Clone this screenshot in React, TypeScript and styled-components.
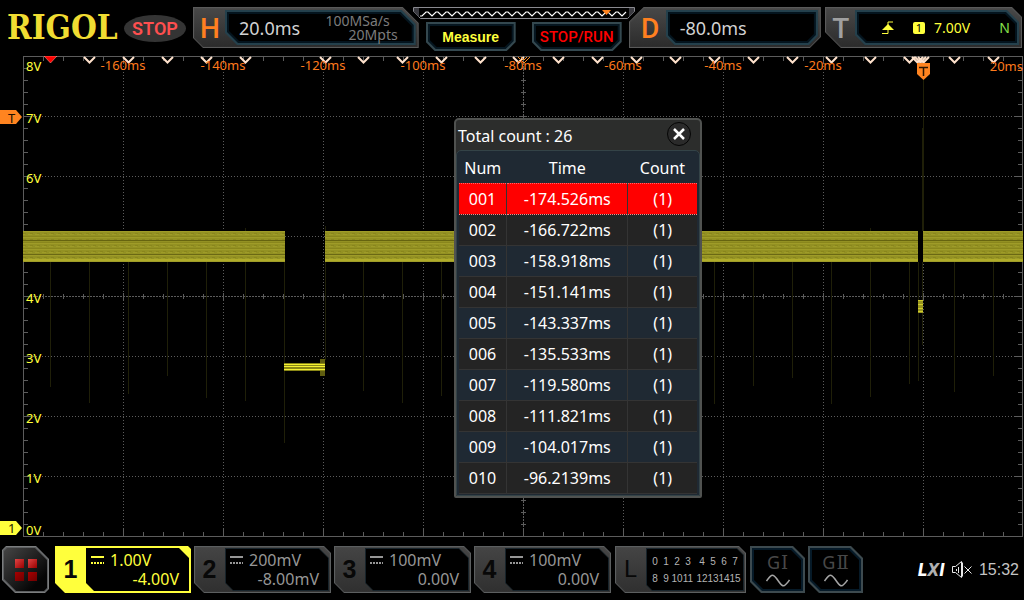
import React from "react";
import styled, { createGlobalStyle, css } from "styled-components";

const UI = `"Noto Sans", "Open Sans", sans-serif`;
const SANS = `"Liberation Sans", Arial, sans-serif`;

const Global = createGlobalStyle`
  *, *::before, *::after { box-sizing: border-box; }
  body { margin: 0; background: #000; color: #fff; font-family: ${UI}; }
  button { margin: 0; padding: 0; border: 0; background: none; color: inherit; font: inherit; cursor: pointer; }
`;

/* ---------- bevelled shapes ---------- */

type Cuts = [number, number, number, number]; // top-left, top-right, bottom-right, bottom-left

const bevel = (cuts: Cuts, inset = 0) => {
  const [a, b, c, d] = cuts.map((v) => Math.max(0, v - Math.round(inset / 2)));
  return `clip-path: polygon(${a}px 0, calc(100% - ${b}px) 0, 100% ${b}px, 100% calc(100% - ${c}px),
    calc(100% - ${c}px) 100%, ${d}px 100%, 0 calc(100% - ${d}px), 0 ${a}px);`;
};

const layers = (cuts: Cuts, edge: string, mid: string, face: string, edgeWidth: number, midWidth: number) => css`
  position: relative;
  isolation: isolate;
  background: ${edge};
  ${bevel(cuts)}
  &::before, &::after { content: ""; position: absolute; z-index: -1; }
  &::before { inset: ${edgeWidth}px; background: ${mid}; ${bevel(cuts, edgeWidth)} }
  &::after { inset: ${edgeWidth + midWidth}px; background: ${face}; ${bevel(cuts, edgeWidth + midWidth)} }
`;

/* ---------- header ---------- */

const Screen = styled.main`
  display: flex;
  flex-direction: column;
  min-height: 100vh;
  overflow: hidden;
`;

const Header = styled.header`
  display: flex;
  align-items: flex-start;
  height: 56px;
  padding: 7px 2px 0 7px;
`;

const Brand = styled.div`
  width: 117px;
  padding-top: 1px;
  font: bold 33px/40px "DejaVu Serif Condensed", "DejaVu Serif", serif;
  color: #f0dc32;
`;

const RunState = styled.div`
  width: 62px;
  height: 27px;
  margin: 8px 7px 0 0;
  border-radius: 50%;
  background: #343434;
  color: #ff4f4f;
  font: 600 18px/28px Roboto, sans-serif;
  text-align: center;
`;

const HeadPanel = styled.section<{ $cuts: Cuts; $grow: number; $gap?: number }>`
  ${(p) => layers(p.$cuts, "#5a5a5a", "linear-gradient(#4b4b4b, #2e2e2e)", "linear-gradient(#474747, #2c2c2c)", 1, 1)}
  display: flex;
  flex: ${(p) => p.$grow} 1 0;
  height: 41px;
  margin-left: ${(p) => p.$gap ?? 0}px;
  padding: 3px 3px 3px 0;
`;

const PanelLetter = styled.h2<{ $color: string; $width: number; $pad?: number }>`
  width: ${(p) => p.$width}px;
  margin: 0;
  padding-left: ${(p) => p.$pad ?? 0}px;
  color: ${(p) => p.$color};
  font: 500 28px/37px Roboto, sans-serif;
  text-align: center;
`;

const Readout = styled.div<{ $cuts: Cuts }>`
  ${(p) => layers(p.$cuts, "#24404c", "#04141e", "#000", 2, 2)}
  display: flex;
  flex: 1;
  align-items: center;
  justify-content: space-between;
  padding: 0 14px;
  color: #d2d2d2;
  font-size: 18px;
  line-height: 24px;
`;

const Acquisition = styled.div`
  display: flex;
  flex-direction: column;
  align-items: flex-end;
  padding-right: 4px;
  color: #7c7c7c;
  font-size: 14px;
  line-height: 14px;
`;

const SampleRate = styled.span`
  padding-right: 8px;
`;

const Trigger = styled.div`
  display: flex;
  flex: 1;
  align-items: center;
  padding-left: 13px;
  color: #ffff3c;
  font-size: 14px;
`;

const Source = styled.span`
  width: 12px;
  height: 12px;
  margin: 0 9px 0 19px;
  border-radius: 2px;
  background: #ffff3c;
  color: #000;
  font-size: 11px;
  line-height: 12px;
  text-align: center;
`;

const Sweep = styled.span`
  margin-left: auto;
  margin-right: -5px;
  color: #86e04a;
`;

const Middle = styled.div`
  width: 222px;
  margin: 0 -6px;
  position: relative;
  z-index: 1;
`;

const MemoryBar = styled.svg`
  display: block;
  width: 100%;
  height: 12px;
`;

const Actions = styled.div`
  display: flex;
  justify-content: space-between;
  padding: 3px 13px 0;
`;

const ActionButton = styled.button<{ $color: string; $font: string }>`
  ${layers([0, 0, 9, 9], "#34484f", "#061620", "#000", 2, 2)}
  width: 90px;
  height: 29px;
  color: ${(p) => p.$color};
  font: ${(p) => p.$font};
`;

/* ---------- plot ---------- */

const PlotArea = styled.section`
  position: relative;
`;

const Chart = styled.svg`
  display: block;
  width: 100%;
  height: auto;
  font-family: ${UI};
  font-size: 13px;
`;

const eventMarks = [89, 128, 167, 206, 245, 325, 363, 402, 441, 480, 518, 558, 597, 636, 675, 714, 753, 792, 831, 870, 909, 917, 920, 923, 954, 993];

const spikes: [number, number, number][] = [
  [50, 262, 387], [89, 262, 403], [128, 262, 394], [167, 262, 376], [206, 262, 398], [245, 228, 401],
  [284, 262, 443], [325, 226, 360], [363, 262, 391], [402, 262, 403], [441, 262, 396], [714, 262, 404],
  [753, 262, 386], [792, 262, 378], [831, 262, 404], [870, 228, 397], [909, 262, 384], [918, 240, 381],
  [922, 128, 345], [923, 80, 232], [954, 262, 392], [993, 262, 376],
];

const timeLabels: [number, string][] = [
  [123, "-160ms"], [223, "-140ms"], [323, "-120ms"], [423, "-100ms"],
  [523, "-80ms"], [623, "-60ms"], [723, "-40ms"], [823, "-20ms"],
];

const voltLabels: [number, string][] = [
  [71, "8V"], [123, "7V"], [183, "6V"], [303, "4V"], [363, "3V"], [423, "2V"], [483, "1V"], [535, "0V"],
];

const range = (from: number, to: number, step: number) =>
  Array.from({ length: Math.floor((to - from) / step) + 1 }, (_, i) => from + i * step);

function ticks() {
  let d = "";
  range(43, 1003, 20).forEach((x) => {
    const major = (x - 23) % 100 === 0;
    d += `M${x + 0.5} 57v${major ? 7 : 4}M${x + 0.5} 536v${major ? -7 : -4}M${x + 0.5} ${major ? 293 : 294}v${major ? 7 : 5}`;
  });
  range(68, 524, 12).forEach((y) => {
    const major = (y - 56) % 60 === 0;
    d += `M24 ${y + 0.5}h${major ? 7 : 4}M1022 ${y + 0.5}h${major ? -7 : -4}M${major ? 520 : 521} ${y + 0.5}h${major ? 7 : 5}`;
  });
  return d;
}

function Band({ x, width }: { x: number; width: number }) {
  return (
    <g>
      <rect x={x} y={231} width={width} height={31} fill="url(#noise)" />
      <rect x={x} y={240} width={width} height={1} fill="#66640f" />
      <rect x={x} y={254} width={width} height={1} fill="#6a6814" />
      <rect x={x} y={259} width={width} height={2} fill="#b0ac2a" />
    </g>
  );
}

function Waveform() {
  return (
    <Chart viewBox="0 56 1024 484" role="img" aria-label="Channel 1 waveform">
      <defs>
        <pattern id="noise" width="7" height="6" y="231" patternUnits="userSpaceOnUse">
          <rect width="7" height="6" fill="#939123" />
          <path d="M0 .5h7M0 3.5h4" stroke="#9f9c28" />
          <path d="M2 2.5h3M0 5.5h7" stroke="#89861c" />
        </pattern>
      </defs>
      <g stroke="#5c5c5c" fill="none" shapeRendering="crispEdges">
        <path strokeDasharray="1 2" d={range(123, 923, 100).map((x) => `M${x + 0.5} 66V536`).join("") + range(116, 476, 60).map((y) => `M24 ${y + 0.5}H1022`).join("")} />
        <path strokeDasharray="2 1" d="M24 296.5H1022M523.5 57V536" />
        <path d="M23.5 56.5H1022.5V536.5H23.5Z" />
        <path d={ticks()} />
      </g>
      <g stroke="#1f1f08" shapeRendering="crispEdges">
        {spikes.map(([x, a, b]) => <path key={x} d={`M${x + 0.5} ${a}V${b}`} />)}
      </g>
      <rect x={918} y={231} width={5} height={31} fill="#000" />
      <Band x={23} width={262} />
      <Band x={325} width={593} />
      <Band x={923} width={100} />
      <g shapeRendering="crispEdges">
        <rect x={320} y={359} width={5} height={17} fill="#5f5d10" />
        <rect x={284} y={363} width={41} height={8} fill="#8a8716" />
        <path d="M284 364.5h41M284 366.5h41M284 369.5h41" stroke="#f4f032" />
        <rect x={918} y={300} width={5} height={13} fill="#98951f" />
        <path d="M918 300.5h5M918 304.5h5M918 308.5h5M918 311.5h5" stroke="#d0cc2c" />
      </g>
      <g fill="none" stroke="#ffe2cc" strokeWidth="2">
        {eventMarks.map((x) => <path key={x} d={`M${x - 5} 57l5.500 5.500 5.500-5.500`} />)}
      </g>
      <path d="M44 56h13l-6.500 7z" fill="#f00" stroke="#ffb0a0" strokeWidth=".5" />
      <path d="M518 57l6 6 6-6M521 57l3 3 3-3" fill="none" stroke="#ff8a20" strokeWidth="1" />
      <g fill="#ff7a1c">
        {timeLabels.map(([x, t]) => <text key={t} x={x} y={70} textAnchor="middle">{t}</text>)}
        <text x={1023} y={71} textAnchor="end">20ms</text>
      </g>
      <g fill="#ffff3c">
        {voltLabels.map(([y, t]) => <text key={t} x={26} y={y}>{t}</text>)}
      </g>
      <path d="M917 63h13v11l-6.500 6-6.500-6z" fill="#ff8420" />
      <path d="M919 67.500h9M923.500 67v9" stroke="#2b1500" strokeWidth="1.500" />
      <path d="M0 110h16l6 7-6 7H0z" fill="#ff8420" />
      <text x={8} y={123} fill="#221000">T</text>
      <path d="M0 521h16l6 7-6 7H0z" fill="#ffff3c" />
      <text x={8} y={533} fill="#222200">1</text>
    </Chart>
  );
}

/* ---------- event table dialog ---------- */

const Dialog = styled.div`
  position: absolute;
  top: 62px;
  left: 454px;
  width: 248px;
  border: 2px solid #505250;
  border-radius: 5px 5px 2px 2px;
  background: #2c2d2c;
  font-size: 16px;
`;

const TitleBar = styled.div`
  display: flex;
  align-items: center;
  justify-content: space-between;
  height: 30px;
  padding: 2px 9px 0 2px;
`;

const Title = styled.h1`
  margin: 0;
  font-size: 16px;
  font-weight: 400;
  line-height: 24px;
`;

const Close = styled.button`
  display: grid;
  place-items: center;
  width: 24px;
  height: 24px;
  margin-top: -4px;
  border: 1px solid #050505;
  border-radius: 50%;
  background: #2a2a2a;
`;

const TableFrame = styled.div`
  padding: 1px 2px;
  border: 1px solid #344347;
  border-radius: 5px 5px 0 0;
  background: #1f2933;
`;

const Events = styled.table`
  width: 100%;
  table-layout: fixed;
  border-collapse: collapse;
  text-align: center;
`;

const HeadCell = styled.th<{ $width: number }>`
  width: ${(p) => p.$width}%;
  height: 31px;
  padding: 2px 0 0;
  font-weight: 400;
  line-height: 24px;
`;

const Row = styled.tr<{ $selected: boolean }>`
  background: ${(p) => (p.$selected ? "#f00" : "#242424")};
  &:nth-child(2n + 3) { background: #1f2933; }
  & > td { ${(p) => p.$selected && "border-top: 1px dotted #f66; border-bottom: 1px dotted #f88;"} }
`;

const Cell = styled.td`
  height: 31px;
  padding: 0;
  border-bottom: 1px solid #343434;
  line-height: 24px;
  & + & { border-left: 1px solid #343434; }
`;

const times = ["-174.526ms", "-166.722ms", "-158.918ms", "-151.141ms", "-143.337ms", "-135.533ms", "-119.580ms", "-111.821ms", "-104.017ms", "-96.2139ms"];

/* ---------- footer ---------- */

const Footer = styled.footer`
  display: flex;
  align-items: center;
  gap: 3px;
  padding: 6px 5px 6px 2px;
`;

const MenuButton = styled.button`
  ${layers([4, 13, 4, 13], "#7b7d7e", "#5c5e60", "linear-gradient(135deg, #454545, #050505 80%)", 1, 1)}
  display: grid;
  place-items: center;
  width: 47px;
  height: 47px;
  margin-right: 3px;
`;

const Tiles = styled.span`
  display: grid;
  grid-template-columns: 9px 9px;
  gap: 4px;
`;

const Tile = styled.i`
  height: 9px;
  background: linear-gradient(135deg, #e04444, #9a0000);
  &:nth-child(n + 3) { background: linear-gradient(135deg, #a80000, #6e0000); }
`;

const ChannelButton = styled.button<{ $active?: boolean; $logic?: boolean }>`
  ${(p) =>
    p.$active
      ? layers([0, 3, 0, 10], "#ffff3c", "#ffff3c", "#ffff3c", 1, 1)
      : layers([0, 7, 0, 10], "#5c5f60", "linear-gradient(#484848, #333)", "linear-gradient(#444, #303030)", 1, 1)}
  display: flex;
  width: ${(p) => (p.$logic ? 131 : p.$active ? 136 : 137)}px;
  height: 47px;
  padding: 2px 2px 2px 0;
  color: ${(p) => (p.$active ? "#ffff3c" : "#969696")};
  ${(p) => p.$logic && "margin: 0 1px;"}
`;

const ChannelNumber = styled.span`
  width: 31px;
  color: #080808;
  font: bold 25px/43px ${SANS};
  text-align: center;
`;

const LogicLetter = styled(ChannelNumber)`
  font: 24px/43px Roboto, sans-serif;
`;

const ChannelBody = styled.span<{ $active?: boolean }>`
  ${(p) => layers([0, 10, 0, 8], p.$active ? "#000" : "#18242b", "#000", "#000", 1, 1)}
  display: flex;
  flex: 1;
  flex-direction: column;
  justify-content: center;
  padding: 1px 10px 0 4px;
  font-size: 16px;
  line-height: 19px;
  text-align: right;
`;

const ScaleLine = styled.span`
  display: flex;
  align-items: center;
  gap: 6px;
`;

const Bits = styled.span`
  ${layers([0, 7, 0, 6], "#18242b", "#000", "#000", 1, 1)}
  display: grid;
  flex: 1;
  grid-template-columns: repeat(4, 11px) 3px repeat(4, 11px);
  align-content: center;
  justify-content: center;
  color: #b4b4b4;
  font: 10px/17px ${SANS};
  text-align: center;
`;

const GeneratorButton = styled.button`
  ${layers([0, 12, 0, 11], "#3d4a4f", "#061a28", "#000", 2, 2)}
  display: flex;
  flex-direction: column;
  align-items: center;
  width: 55px;
  height: 47px;
  padding-top: 5px;
  color: #484848;
  font-size: 18px;
  line-height: 23px;
`;

const Roman = styled.span`
  margin-left: 1px;
  font-family: "DejaVu Serif", serif;
  font-size: 18px;
`;

const Status = styled.div`
  display: flex;
  align-items: center;
  gap: 7px;
  margin-left: auto;
  color: #c4c4c4;
  font: 16px/24px ${SANS};
`;

const Lxi = styled.span`
  color: #fff;
  font: italic 900 17px/24px "DejaVu Sans Condensed", ${SANS};
  & > span { color: #b0b0b0; }
`;

const Coupling = () => (
  <svg width="14" height="9" viewBox="0 0 14 9" stroke="currentColor" shapeRendering="crispEdges">
    <path d="M1 1h13" strokeWidth="2" />
    <path d="M1 6.500h13" strokeWidth="2" strokeDasharray="2 1" />
  </svg>
);

function Channel({ n, scale, offset, active }: { n: number; scale: string; offset: string; active?: boolean }) {
  return (
    <ChannelButton $active={active} aria-label={`Channel ${n}`}>
      <ChannelNumber>{n}</ChannelNumber>
      <ChannelBody $active={active}>
        <ScaleLine><Coupling />{scale}</ScaleLine>
        <span>{offset}</span>
      </ChannelBody>
    </ChannelButton>
  );
}

function Generator({ numeral }: { numeral: string }) {
  return (
    <GeneratorButton>
      <span>G<Roman>{numeral}</Roman></span>
      <svg width="24" height="13" viewBox="0 0 24 13" fill="none" stroke="#a4a4a4" strokeWidth="1.6">
        <path d="M.5 7C3 3.500 4.500 1.200 6.500 1.200S10 4 12 6.500s3.500 5.300 5.500 5.300S21 9.500 23.500 6" />
      </svg>
    </GeneratorButton>
  );
}

const wavePath = "M7 9" + range(0, 19, 1).map((i) => `L${9 + i * 10} 9L${13 + i * 10} 5h2`).join("") + "L209 9L213 5";

export default function App() {
  return (
    <Screen>
      <Global />
      <Header>
        <Brand>RIGOL</Brand>
        <RunState>STOP</RunState>
        <HeadPanel $cuts={[0, 16, 0, 10]} $grow={226}>
          <PanelLetter $color="#ff8020" $width={32} $pad={2}>H</PanelLetter>
          <Readout $cuts={[0, 14, 0, 12]}>
            <span>20.0ms</span>
            <Acquisition>
              <SampleRate>100MSa/s</SampleRate>
              <span>20Mpts</span>
            </Acquisition>
          </Readout>
        </HeadPanel>
        <Middle>
          <MemoryBar viewBox="0 0 222 12">
            <path d="M.5.5h221v4l-7 7h-207l-7-7z" fill="#000" stroke="#8a8a90" />
            <path d="M1 1h5v9l-5-5zM221 1h-5v9l5-5z" fill="#3a3a40" />
            <path d={wavePath} fill="none" stroke="#fff" strokeWidth="1.200" />
            <path d="M189 3h9l-4.500 5z" fill="#ff8420" />
          </MemoryBar>
          <Actions>
            <ActionButton $color="#ffff3c" $font={`bold 14px/28px ${SANS}`}>Measure</ActionButton>
            <ActionButton $color="#f00" $font="500 15px/28px Roboto, sans-serif">STOP/RUN</ActionButton>
          </Actions>
        </Middle>
        <HeadPanel $cuts={[15, 0, 11, 0]} $grow={192}>
          <PanelLetter $color="#ff8020" $width={37} $pad={6}>D</PanelLetter>
          <Readout $cuts={[0, 0, 9, 9]}>
            <span>-80.0ms</span>
          </Readout>
        </HeadPanel>
        <HeadPanel $cuts={[0, 10, 0, 16]} $grow={197} $gap={4}>
          <PanelLetter $color="#a0a0a0" $width={30} $pad={2}>T</PanelLetter>
          <Readout $cuts={[0, 12, 0, 10]}>
            <Trigger>
              <svg width="12" height="14" viewBox="0 0 12 14">
                <path d="M0 12.500h6V1h5" fill="none" stroke="#ffff3c" />
                <path d="M0 9l6-6 6 6z" fill="#ffff3c" />
              </svg>
              <Source>1</Source>
              7.00V
              <Sweep>N</Sweep>
            </Trigger>
          </Readout>
        </HeadPanel>
      </Header>

      <PlotArea>
        <Waveform />
        <Dialog role="dialog" aria-labelledby="events-title">
          <TitleBar>
            <Title id="events-title">Total count : 26</Title>
            <Close aria-label="Close">
              <svg width="12" height="12" viewBox="0 0 12 12" stroke="#fff" strokeWidth="2.500">
                <path d="M1 1l10 10M11 1L1 11" />
              </svg>
            </Close>
          </TitleBar>
          <TableFrame>
            <Events>
              <thead>
                <tr>
                  <HeadCell $width={20}>Num</HeadCell>
                  <HeadCell $width={51}>Time</HeadCell>
                  <HeadCell $width={29}>Count</HeadCell>
                </tr>
              </thead>
              <tbody>
                {times.map((t, i) => (
                  <Row key={t} $selected={i === 0}>
                    <Cell>{String(i + 1).padStart(3, "0")}</Cell>
                    <Cell>{t}</Cell>
                    <Cell>(1)</Cell>
                  </Row>
                ))}
              </tbody>
            </Events>
          </TableFrame>
        </Dialog>
      </PlotArea>

      <Footer>
        <MenuButton aria-label="Menu">
          <Tiles><Tile /><Tile /><Tile /><Tile /></Tiles>
        </MenuButton>
        <Channel n={1} scale="1.00V" offset="-4.00V" active />
        <Channel n={2} scale="200mV" offset="-8.00mV" />
        <Channel n={3} scale="100mV" offset="0.00V" />
        <Channel n={4} scale="100mV" offset="0.00V" />
        <ChannelButton $logic aria-label="Logic channels">
          <LogicLetter>L</LogicLetter>
          <Bits>
            {range(0, 15, 1).map((b) => (
              <React.Fragment key={b}>
                {b % 8 === 4 && <span />}
                <span>{b}</span>
              </React.Fragment>
            ))}
          </Bits>
        </ChannelButton>
        <Generator numeral="Ⅰ" />
        <Generator numeral="Ⅱ" />
        <Status>
          <Lxi>L<span>X</span>I</Lxi>
          <svg width="20" height="18" viewBox="0 0 20 18" fill="none" stroke="#e8e8e8">
            <path d="M.5 5.500h3l6-5v16l-6-5h-3zM10.500 1.500v14M6.500 6v6M4.500 8v2M12.500 5.500l7 7M19.500 5.500l-7 7" />
          </svg>
          <span>15:32</span>
        </Status>
      </Footer>
    </Screen>
  );
}
